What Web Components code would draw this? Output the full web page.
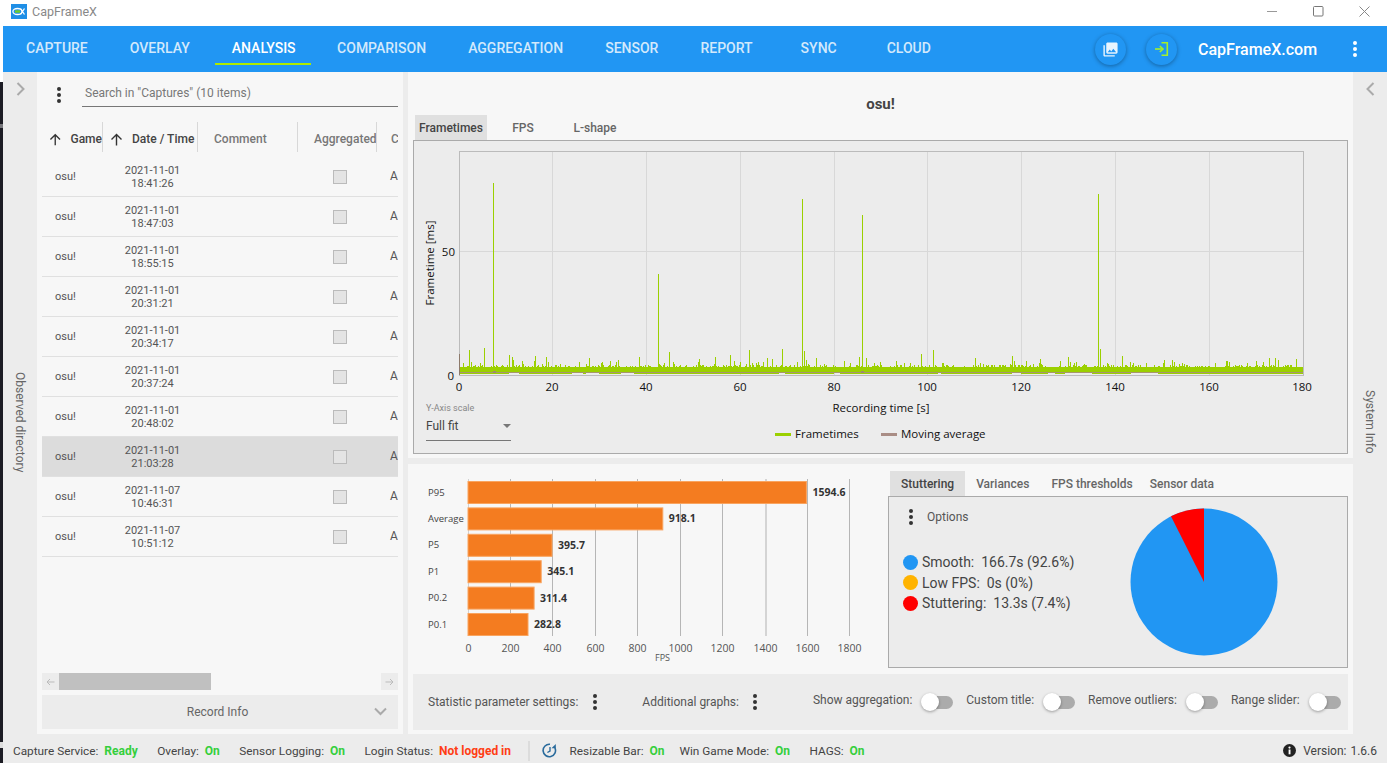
<!DOCTYPE html>
<html>
<head>
<meta charset="utf-8">
<title>CapFrameX</title>
<style>
  html, body { margin: 0; height: 100%; overflow: hidden; }
  body {
    display: flex;
    width: 1387px;
    height: 763px;
    font-family: Roboto, "Liberation Sans", sans-serif;
    font-size: 12px;
    color: #444;
    background: #fff;
  }
  .edge {
    flex: 0 0 3px;
    background: linear-gradient(#fff 0, #fff 82px, #1c1c24 82px, #1c1c24 124px, #77777c 124px, #77777c 128px, #1c1c24 128px, #1c1c24 742px, #ddd 742px, #ddd 748px, #1c1c24 748px);
  }
  .window { flex: 1; display: flex; flex-direction: column; min-width: 0; }
  .main { display: flex; height: 666px; background: #ececec; }
  .left { flex: 0 0 366px; height: 662px; }
  .gutter { flex: 0 0 5px; }
  .right { flex: 0 0 945px; min-width: 0; display: flex; flex-direction: column; gap: 6px; height: 662px; }
</style>
</head>
<body>
  <div class="edge"></div>
  <div class="window">
    <cx-titlebar>CapFrameX</cx-titlebar>
    <cx-nav></cx-nav>
    <div class="main">
      <cx-rail side="left">Observed directory</cx-rail>
      <cx-captures class="left"></cx-captures>
      <div class="gutter"></div>
      <div class="right">
        <cx-frametimes></cx-frametimes>
        <cx-lower-panel></cx-lower-panel>
      </div>
      <cx-rail side="right">System Info</cx-rail>
    </div>
    <cx-status></cx-status>
  </div>

<script>
const ROBOTO = 'Roboto, "Liberation Sans", sans-serif';
const SEGOE = '"Open Sans", "Noto Sans", sans-serif';

function makeTemplate(html) {
  const t = document.createElement('template');
  t.innerHTML = html;
  return t;
}

class Base extends HTMLElement {
  connectedCallback() {
    if (this.shadowRoot) return;
    const root = this.attachShadow({ mode: 'open' });
    root.appendChild(this.constructor.template.content.cloneNode(true));
    if (this.ready) this.ready(root);
  }
}

class Kebab extends Base {
  static template = makeTemplate(`
    <style>
      :host { display: inline-flex; flex-direction: column; gap: 2px; align-items: center; width: 5px; }
      i { display: block; width: 4px; height: 4px; border-radius: 50%; background: var(--dot, #333); }
    </style>
    <i></i><i></i><i></i>`);
}
customElements.define('cx-kebab', Kebab);

class Toggle extends Base {
  static template = makeTemplate(`
    <style>
      :host { display: inline-block; position: relative; width: 32px; height: 18px; }
      .track { position: absolute; left: 9px; right: 0; top: 3px; height: 13px; border-radius: 7px; background: #ababab; }
      .thumb { position: absolute; left: 0; top: 0; width: 18px; height: 18px; border-radius: 50%; background: #fff; box-shadow: 0 1px 3px rgba(0,0,0,.35); }
    </style>
    <div class="track"></div><div class="thumb"></div>`);
}
customElements.define('cx-toggle', Toggle);

class Tab extends Base {
  static template = makeTemplate(`
    <style>
      :host { display: flex; align-items: center; justify-content: center; height: 25px; color: #666; font: 500 12px ${ROBOTO}; box-sizing: border-box; }
      :host([active]) { background: #e0e0e0; color: #444; }
    </style>
    <slot></slot>`);
}
customElements.define('cx-tab', Tab);

class Titlebar extends Base {
  static template = makeTemplate(`
    <style>
      :host { display: flex; align-items: center; height: 26px; background: #fff; color: #888; font: 12.5px ${ROBOTO}; padding-left: 8px; padding-bottom: 3px; box-sizing: border-box; }
      .logo { width: 16px; height: 15px; margin-right: 5px; }
      .btns { margin-left: auto; display: flex; padding-right: 17px; gap: 35px; align-items: center; }
      svg { display: block; }
    </style>
    <svg class="logo" viewBox="0 0 16 15">
      <rect width="16" height="15" fill="#1f8fe6"/>
      <ellipse cx="6.5" cy="7.5" rx="4.6" ry="3" fill="none" stroke="#fff" stroke-width="1.3"/>
      <path d="M4 7.5h5" stroke="#6fcf2a" stroke-width="2.4"/>
      <path d="M9.5 4.5l4 6M13.5 4.5l-4 6" stroke="#fff" stroke-width="1.3"/>
    </svg>
    <slot></slot>
    <div class="btns">
      <svg width="11" height="11" viewBox="0 0 11 11"><path d="M0 5.5h10" stroke="#999" fill="none"/></svg>
      <svg width="11" height="11" viewBox="0 0 11 11"><rect x=".5" y=".5" width="9.5" height="9.5" rx="1" stroke="#777" fill="none"/></svg>
      <svg width="11" height="11" viewBox="0 0 11 11"><path d="M.5.5l10 10M10.5.5l-10 10" stroke="#888" fill="none"/></svg>
    </div>`);
}
customElements.define('cx-titlebar', Titlebar);

class Nav extends Base {
  static template = makeTemplate(`
    <style>
      :host { display: flex; align-items: center; height: 46px; background: #2196f3; padding-left: 6px; box-sizing: border-box; font: 500 14px ${ROBOTO}; color: #d3e9fc; }
      .item { height: 46px; line-height: 45px; padding: 0 17px; margin-right: 8px; box-sizing: border-box; }
      .item.on { color: #fff; border-bottom: 2px solid #aeea00; height: 39px; align-self: flex-start; line-height: 45px; padding-right: 15px; margin-right: 9.5px; }
      .item.report { margin-right: 14px; }
      .item.sync { margin-right: 16px; }
      .round { width: 31px; height: 31px; border-radius: 50%; background: #2196f3; box-shadow: 0 1px 4px rgba(0,0,0,.35); display: flex; align-items: center; justify-content: center; }
      .first { margin-left: auto; margin-right: 20px; }
      .site { margin-left: 21px; color: #fff; font-size: 16px; width: 120px; white-space: nowrap; }
      cx-kebab { --dot: #fff; margin: 0 30px 0 34px; }
    </style>
    <div class="item">CAPTURE</div>
    <div class="item">OVERLAY</div>
    <div class="item on">ANALYSIS</div>
    <div class="item">COMPARISON</div>
    <div class="item">AGGREGATION</div>
    <div class="item">SENSOR</div>
    <div class="item report">REPORT</div>
    <div class="item sync">SYNC</div>
    <div class="item">CLOUD</div>
    <div class="round first">
      <svg width="17" height="17" viewBox="0 0 24 24"><path fill="#e8f4fe" d="M22 16V4c0-1.1-.9-2-2-2H8c-1.1 0-2 .9-2 2v12c0 1.1.9 2 2 2h12c1.100 0 2-.9 2-2zm-11-4l2.030 2.710L16 11l4 5H8l3-4zM2 6v14c0 1.100.9 2 2 2h14v-2H4V6H2z"/></svg>
    </div>
    <div class="round">
      <svg width="16" height="16" viewBox="0 0 16 16" fill="none" stroke="#a6f02a" stroke-width="1.6"><path d="M7.500 1.800h5.800v12.400H7.500"/><path d="M1 8h7.500"/><path d="M5.800 5l3.200 3-3.200 3"/></svg>
    </div>
    <div class="site">CapFrameX.com</div>
    <cx-kebab></cx-kebab>`);
}
customElements.define('cx-nav', Nav);

class Rail extends Base {
  static template = makeTemplate(`
    <style>
      :host { display: flex; flex-direction: column; flex: 0 0 34px; align-items: center; color: #666; font: 12px ${ROBOTO}; }
      .head { height: 34px; display: flex; align-items: center; }
      .label { flex: 1; display: flex; align-items: center; writing-mode: vertical-rl; justify-content: center; }
      svg { display: block; }
    </style>
    <div class="head"><svg width="9" height="14" viewBox="0 0 9 14" fill="none" stroke="#aaa" stroke-width="2"><path id="p" d="M1.500 1l6 6-6 6"/></svg></div>
    <div class="label"><slot></slot></div>`);
  ready(root) {
    if (this.getAttribute('side') === 'right') root.getElementById('p').setAttribute('d', 'M7.500 1l-6 6 6 6');
  }
}
customElements.define('cx-rail', Rail);

const capturesRows = [
  ['18:41:26', '2021-11-01'], ['18:47:03', '2021-11-01'], ['18:55:15', '2021-11-01'],
  ['20:31:21', '2021-11-01'], ['20:34:17', '2021-11-01'], ['20:37:24', '2021-11-01'],
  ['20:48:02', '2021-11-01'], ['21:03:28', '2021-11-01'], ['10:46:31', '2021-11-07'],
  ['10:51:12', '2021-11-07']
];
const upArrow = `<svg width="13" height="13" viewBox="0 0 13 13" fill="none" stroke="#333" stroke-width="1.400"><path d="M6.500 12.500V1.500M1.500 6.500l5-5 5 5"/></svg>`;

class Captures extends Base {
  static template = makeTemplate(`
    <style>
      :host { display: flex; flex-direction: column; background: #f7f7f7; padding: 0 5px; box-sizing: border-box; font: 12px ${ROBOTO}; color: #555; }
      .search { display: flex; align-items: center; height: 35px; }
      .search cx-kebab { margin: 11px 0 0 14px; }
      .input { margin-left: 21px; flex: 1; height: 26px; padding: 2px 0 0 3px; line-height: 21px; border-bottom: 1px solid #777; color: #777; box-sizing: border-box; margin-top: 9px; }
      .grid { display: grid; grid-template-columns: 61px 95px 100px 79px 21px; overflow: hidden; }
      .head { height: 30px; margin-top: 15px; font-weight: 500; color: #777; }
      .head div { display: flex; align-items: center; border-right: 1px solid #d8d8d8; white-space: nowrap; overflow: hidden; box-sizing: border-box; padding: 4px 0 0 16px; }
      .head div:last-child { border: 0; padding-left: 14px; }
      .head .dark { color: #444; padding-left: 7px; gap: 9px; }
      .rows { margin-top: 5px; }
      .row { height: 40px; align-items: center; border-bottom: 1px solid #e0e0e0; box-sizing: border-box; font-size: 11px; line-height: 13px; }
      .row.sel { background: #dcdcdc; }
      .game { padding-left: 13px; }
      .date { text-align: center; padding-left: 4px; }
      .chk { width: 14px; height: 14px; background: #e4e4e4; border: 1px solid #bbb; box-sizing: border-box; justify-self: center; margin-right: -4px; }
      .a { padding-left: 13px; overflow: hidden; font-size: 12px; }
      .scroll { margin-top: auto; height: 17px; display: flex; }
      .scroll .btn { width: 17px; background: #ececec; display: flex; align-items: center; justify-content: center; }
      .thumb { width: 152px; background: #c0c0c0; }
      .fill { flex: 1; }
      .info { margin: 5px 0; height: 34px; background: #ececec; display: flex; align-items: center; justify-content: center; position: relative; color: #666; padding-right: 5px; box-sizing: border-box; }
      .info svg { position: absolute; right: 11px; top: 12px; }
    </style>
    <div class="search"><cx-kebab></cx-kebab><div class="input">Search in "Captures" (10 items)</div></div>
    <div class="grid head">
      <div class="dark">${upArrow}<span>Game</span></div>
      <div class="dark">${upArrow}<span>Date / Time</span></div>
      <div>Comment</div>
      <div>Aggregated</div>
      <div>C</div>
    </div>
    <div class="rows" id="rows"></div>
    <div class="scroll">
      <div class="btn"><svg width="9" height="8" viewBox="0 0 9 8" fill="none" stroke="#bbb"><path d="M8.500 4H1M4 1L1 4l3 3"/></svg></div>
      <div class="thumb"></div><div class="fill"></div>
      <div class="btn"><svg width="9" height="8" viewBox="0 0 9 8" fill="none" stroke="#bbb"><path d="M.5 4H8M5 1l3 3-3 3"/></svg></div>
    </div>
    <div class="info">Record Info
      <svg width="13" height="9" viewBox="0 0 13 9" fill="none" stroke="#aaa" stroke-width="2"><path d="M1 1.500l5.500 5.500L12 1.500"/></svg>
    </div>`);
  ready(root) {
    const rows = root.getElementById('rows');
    capturesRows.forEach(([time, date], i) => {
      const row = document.createElement('div');
      row.className = 'grid row' + (i === 7 ? ' sel' : '');
      row.innerHTML = `<div class="game">osu!</div><div class="date">${date}<br>${time}</div><div></div><div class="chk"></div><div class="a">A</div>`;
      rows.appendChild(row);
    });
  }
}
customElements.define('cx-captures', Captures);

// cheap seeded random so the noise in the trace stays the same between runs
let seed = 1337;
function rnd() {
  seed = (seed * 1664525 + 1013904223) % 4294967296;
  return seed / 4294967296;
}

function frametimeTrace() {
  const big = [[493, 183], [658, 274], [802, 199], [862, 215], [1098, 194]];
  const mid = [[469, 350], [484, 348], [509, 355], [513, 360], [535, 356], [546, 357], [639, 357], [669, 352], [730, 355], [749, 350],
    [782, 349], [804, 351], [921, 354], [933, 350], [975, 358], [1012, 356], [1040, 359], [1068, 357], [1100, 349], [1122, 356], [1296, 359]];
  let d = '';
  for (let x = 460; x < 1303; x++) {
    const r = rnd();
    if (r < 0.42) d += `M${x + .5} 368V${(367 - rnd() * 2).toFixed(0)}`;
    else if (r < 0.49) d += `M${x + .5} 368V${(364 - rnd() * 3).toFixed(0)}`;
    else if (r < 0.51) d += `M${x + .5} 368V${(360 - rnd() * 3).toFixed(0)}`;
  }
  big.concat(mid).forEach(([x, y]) => { d += `M${x + .5} 368V${y}`; });
  let low = '';
  for (let x = 460; x < 1303;) {
    const run = 2 + Math.floor(rnd() * 14);
    if (rnd() < 0.85) low += `M${x} 373.500h${Math.min(run, 1303 - x)}`;
    x += run;
  }
  return { d, low };
}

class Frametimes extends Base {
  static template = makeTemplate(`
    <style>
      :host { display: block; height: 386px; background: #f7f7f7; padding: 0 5px; box-sizing: border-box; }
      .title { height: 43px; padding-top: 24px; box-sizing: border-box; text-align: center; font: 700 15px/16px ${ROBOTO}; color: #444; }
      .tabs { display: grid; grid-template-columns: repeat(3, 72px); margin-left: 2px; }
      .box { position: relative; height: 314px; border: 1px solid #aaa; background: #ececec; box-sizing: border-box; }
      svg { display: block; }
      text { font-family: ${SEGOE}; font-size: 11.5px; fill: #111; }
      .scale { position: absolute; left: 12px; top: 262px; width: 85px; color: #444; font: 12px ${ROBOTO}; }
      .scale small { display: block; font: 9px ${ROBOTO}; color: #888; height: 14px; }
      .select { display: flex; justify-content: space-between; align-items: center; height: 24px; border-bottom: 1px solid #777; padding-bottom: 5px; box-sizing: border-box; }
      .select i { width: 0; height: 0; border: 4px solid transparent; border-top: 4px solid #777; border-bottom: 0; }
    </style>
    <div class="title">osu!</div>
    <div class="tabs"><cx-tab active>Frametimes</cx-tab><cx-tab>FPS</cx-tab><cx-tab>L-shape</cx-tab></div>
    <div class="box">
      <svg id="s" width="933" height="312" viewBox="414 141 933 312"></svg>
      <div class="scale"><small>Y-Axis scale</small><div class="select"><span>Full fit</span><i></i></div></div>
    </div>`);
  ready(root) {
    const t = frametimeTrace();
    let grid = '', labels = '';
    for (let i = 0; i <= 9; i++) {
      const x = 459.5 + Math.floor(i * 93.75);
      if (i > 0 && i < 9) grid += `<path d="M${x} 152V375" stroke="#d8d8d8"/>`;
      labels += `<text x="${x - .5}" y="391" text-anchor="middle">${i * 20}</text>`;
    }
    root.getElementById('s').innerHTML = `
      <g shape-rendering="crispEdges">
        ${grid}
        <path d="M460 251.500H1303" stroke="#d8d8d8"/>
        <rect x="459.500" y="151.500" width="844" height="224" fill="none" stroke="#bbb"/>
        <path d="M459.500 354V375" stroke="#8d7a6b"/>
        <rect x="460" y="367" width="843" height="5" fill="#9bd000"/>
        <path d="${t.d}" stroke="#9bd000" fill="none"/>
        <path d="${t.low}" stroke="#9bd000" fill="none"/>
        <rect x="460" y="372" width="843" height="1" fill="#a8966e"/>
        <rect x="493" y="371" width="3" height="2" fill="#a08a70"/>
        <rect x="861" y="371" width="3" height="2" fill="#a08a70"/>
        <rect x="775" y="432.500" width="16" height="3" fill="#9bd000"/>
        <rect x="881" y="432.500" width="16" height="3" fill="#a98d85"/>
      </g>
      ${labels}
      <text x="454" y="380" text-anchor="end">0</text>
      <text x="455" y="256" text-anchor="end">50</text>
      <text x="881" y="412" text-anchor="middle">Recording time [s]</text>
      <text transform="translate(434 263) rotate(-90)" text-anchor="middle">Frametime [ms]</text>
      <text x="795" y="438">Frametimes</text>
      <text x="901" y="438">Moving average</text>`;
  }
}
customElements.define('cx-frametimes', Frametimes);

const barData = [
  ['P95', 1594.6], ['Average', 918.1], ['P5', 395.7], ['P1', 345.1], ['P0.2', 311.4], ['P0.1', 282.8]
];

class FpsBars extends Base {
  static template = makeTemplate(`
    <style>
      :host { display: block; flex: 0 0 475px; }
      svg { display: block; }
      text { font-family: ${SEGOE}; fill: #555; font-size: 10.5px; }
      .cat { font-size: 9.500px; fill: #444; }
      .val { font-weight: 700; fill: #333; font-size: 10.500px; }
    </style>
    <svg id="s" width="475" height="210" viewBox="413 464 475 210"></svg>`);
  ready(root) {
    const sx = v => 467.5 + v * 0.2122;
    let out = '';
    for (let v = 0; v <= 1800; v += 200) {
      const x = Math.round(sx(v)) + .5;
      out += `<path d="M${x} 479V636" stroke="${v === 0 ? '#d0d0d0' : v === 1400 ? '#d4d4d4' : '#b6b6b6'}" stroke-width="${v === 1400 ? 2 : 1}" shape-rendering="crispEdges"/>`;
      out += `<text x="${x}" y="652" text-anchor="middle">${v}</text>`;
    }
    barData.forEach(([name, v], i) => {
      const y = 481 + i * 26.4;
      const w = sx(v) - 467.5;
      out += `<rect x="468" y="${y + .5}" width="${w.toFixed(1)}" height="22" fill="#f47c20" stroke="#f9a45f"/>`;
      out += `<text class="cat" x="428" y="${y + 14.5}">${name}</text>`;
      out += `<text class="val" x="${(sx(v) + 6.5).toFixed(1)}" y="${y + 15}">${v.toFixed(1)}</text>`;
    });
    out += `<text x="662.500" y="661" text-anchor="middle" style="font-size:9px">FPS</text>`;
    root.getElementById('s').innerHTML = out;
  }
}
customElements.define('cx-fps-bars', FpsBars);

class Stutter extends Base {
  static template = makeTemplate(`
    <style>
      :host { display: block; flex: 0 0 460px; padding-top: 7px; box-sizing: border-box; }
      .tabs { display: flex; margin-left: 2px; }
      .tabs cx-tab { padding: 0 11px; }
      .tabs cx-tab:last-child { margin-left: -5px; }
      .box { display: flex; height: 172px; border: 1px solid #aaa; background: #ececec; box-sizing: border-box; }
      .left { flex: 0 0 241px; font: 12px ${ROBOTO}; color: #555; }
      .opts { display: flex; align-items: center; height: 16px; margin: 12px 0 0 19px; gap: 14px; }
      .legend { margin: 27px 0 0 14px; font-size: 14px; color: #444; }
      .legend div { display: flex; align-items: center; gap: 4px; height: 20.500px; white-space: pre; }
      .legend i { width: 15px; height: 15px; border-radius: 50%; }
      svg { display: block; margin-top: 11px; }
    </style>
    <div class="tabs"><cx-tab active>Stuttering</cx-tab><cx-tab>Variances</cx-tab><cx-tab>FPS thresholds</cx-tab><cx-tab>Sensor data</cx-tab></div>
    <div class="box">
      <div class="left">
        <div class="opts"><cx-kebab></cx-kebab><span>Options</span></div>
        <div class="legend">
          <div><i style="background:#2196f3"></i>Smooth:  166.7s (92.6%)</div>
          <div><i style="background:#ffb300"></i>Low FPS:  0s (0%)</div>
          <div><i style="background:#ff0000"></i>Stuttering:  13.3s (7.4%)</div>
        </div>
      </div>
      <svg width="148" height="148" viewBox="-74 -74 148 148">
        <circle r="73.500" fill="#2196f3"/>
        <path d="M0 0L-33 -65.700A73.500 73.500 0 0 1 0 -73.500Z" fill="#ff0000"/>
      </svg>
    </div>`);
}
customElements.define('cx-stutter', Stutter);

class OptionsBar extends Base {
  static template = makeTemplate(`
    <style>
      :host { display: flex; align-items: center; height: 56px; margin: 0 5px; background: #ececec; font: 12px ${ROBOTO}; color: #555; white-space: nowrap; box-sizing: border-box; padding-left: 15px; }
      cx-kebab { margin: 0 14px 0 14px; --dot: #333; }
      .gap { margin-left: 31px; }
      .sw { display: flex; align-items: center; gap: 9px; margin-bottom: 1px; }
      .sw span { margin-top: -3px; }
      .sw + .sw { margin-left: 13px; }
      .first { margin-left: 41px; }
    </style>
    <span>Statistic parameter settings:</span><cx-kebab></cx-kebab>
    <span class="gap">Additional graphs:</span><cx-kebab></cx-kebab>
    <div class="sw first"><span>Show aggregation:</span><cx-toggle></cx-toggle></div>
    <div class="sw"><span>Custom title:</span><cx-toggle></cx-toggle></div>
    <div class="sw"><span>Remove outliers:</span><cx-toggle></cx-toggle></div>
    <div class="sw"><span>Range slider:</span><cx-toggle></cx-toggle></div>`);
}
customElements.define('cx-options-bar', OptionsBar);

class LowerPanel extends Base {
  static template = makeTemplate(`
    <style>
      :host { display: flex; flex-direction: column; height: 270px; background: #f7f7f7; box-sizing: border-box; }
      .top { display: flex; height: 210px; padding-left: 5px; }
    </style>
    <div class="top"><cx-fps-bars></cx-fps-bars><cx-stutter></cx-stutter></div>
    <cx-options-bar></cx-options-bar>`);
}
customElements.define('cx-lower-panel', LowerPanel);

class Status extends Base {
  static template = makeTemplate(`
    <style>
      :host { display: flex; align-items: center; height: 25px; background: #ececec; padding: 0 10px; font: 11.8px ${ROBOTO}; color: #444; white-space: nowrap; box-sizing: border-box; }
      b { font-weight: 700; color: #35cf3c; margin-left: 3px; font-size: 12px; }
      b.bad { color: #ff3d14; }
      .item { margin-right: 19.5px; }
      .item.tight { margin-right: 15px; }
      .sep { width: 2px; height: 20px; background: #dcdcdc; margin: 0 12px 0 -3px; }
      .hist { margin-right: 13px; display: block; }
      .ver { margin-left: auto; display: flex; align-items: center; gap: 7px; font-size: 12px; }
      .ver span { word-spacing: 1px; }
    </style>
    <span class="item">Capture Service: <b>Ready</b></span>
    <span class="item">Overlay: <b>On</b></span>
    <span class="item">Sensor Logging: <b>On</b></span>
    <span class="item">Login Status: <b class="bad">Not logged in</b></span>
    <div class="sep"></div>
    <svg class="hist" width="15" height="15" viewBox="0 0 15 15" fill="none" stroke="#2a6b9c" stroke-width="1.600">
      <path d="M12.900 4.800A6.200 6.200 0 1 1 8 1.300"/><path d="M8 4v4l-2.600 1.500" stroke-width="1.400"/>
      <path d="M9.500 5.200h4.300V1z" fill="#2a6b9c" stroke="none"/>
    </svg>
    <span class="item tight">Resizable Bar: <b>On</b></span>
    <span class="item">Win Game Mode: <b>On</b></span>
    <span class="item">HAGS: <b>On</b></span>
    <div class="ver">
      <svg width="13" height="13" viewBox="0 0 13 13"><circle cx="6.500" cy="6.500" r="6.500" fill="#222"/><rect x="5.600" y="5.500" width="1.900" height="4.800" fill="#fff"/><circle cx="6.500" cy="3.600" r="1.100" fill="#fff"/></svg>
      <span>Version: 1.6.6</span>
    </div>`);
}
customElements.define('cx-status', Status);
</script>
</body>
</html>
